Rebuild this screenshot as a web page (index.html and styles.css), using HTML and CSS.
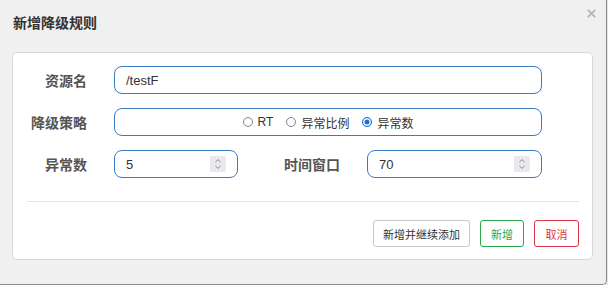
FILE: index.html
```html
<!DOCTYPE html>
<html lang="zh-CN">
<head>
<meta charset="utf-8">
<title>新增降级规则</title>
<link rel="stylesheet" href="styles.css">
</head>
<body>
<div class="modal">
  <div class="modal-header">
    <h4 class="title">新增降级规则</h4>
    <svg class="close" width="9" height="9" viewBox="0 0 9 9"><path d="M0.8 0.8L8.2 8.2M8.2 0.8L0.8 8.2" stroke="#b3b3b3" stroke-width="1.7" fill="none"/></svg>
  </div>
  <div class="card">
    <div class="row">
      <label class="lbl">资源名</label>
      <div class="input wide">/testF</div>
    </div>
    <div class="row">
      <label class="lbl">降级策略</label>
      <div class="input wide radios">
        <span class="opt"><span class="dot"></span>RT</span>
        <span class="opt"><span class="dot"></span>异常比例</span>
        <span class="opt"><span class="dot on"></span>异常数</span>
      </div>
    </div>
    <div class="row">
      <label class="lbl">异常数</label>
      <div class="input short">5<span class="spin"><svg width="16" height="16" viewBox="0 0 16 16"><path d="M5.5 6L8 3.6L10.5 6M5.5 10L8 12.4L10.5 10" stroke="#8a8a8a" stroke-width="1" fill="none"/></svg></span></div>
      <label class="lbl lbl2">时间窗口</label>
      <div class="input mid">70<span class="spin"><svg width="16" height="16" viewBox="0 0 16 16"><path d="M5.5 6L8 3.6L10.5 6M5.5 10L8 12.4L10.5 10" stroke="#8a8a8a" stroke-width="1" fill="none"/></svg></span></div>
    </div>
    <hr class="sep">
    <div class="actions">
      <button class="btn">新增并继续添加</button>
      <button class="btn btn-ok">新增</button>
      <button class="btn btn-cancel">取消</button>
    </div>
  </div>
</div>
</body>
</html>
```
FILE: styles.css
```css
html, body {
  margin: 0;
  padding: 0;
  background: #e6e6e6;
}
body {
  font-family: "Liberation Sans", "Noto Sans CJK SC", sans-serif;
}
.modal {
  width: 606px;
  height: 284px;
  background: #f0f0f0;
  border-right: 1px solid #8c8c8c;
  border-bottom: 1px solid #8c8c8c;
  border-bottom-right-radius: 5px;
}
.modal-header {
  height: 52px;
  box-sizing: border-box;
  padding: 13px 10px 0 13px;
  display: flex;
  justify-content: space-between;
  align-items: flex-start;
}
.title {
  margin: 0;
  font-size: 14px;
  line-height: 20px;
  font-weight: bold;
  color: #333;
}
.close {
  margin-top: -4px;
}
.card {
  margin: 0 13px 0 12px;
  background: #fff;
  border: 1px solid #d9d9d9;
  border-radius: 5px;
  padding: 13px 0 12px;
}
.row {
  display: flex;
  align-items: center;
  height: 28px;
  margin-bottom: 14px;
}
.row:last-of-type {
  margin-bottom: 0;
}
.lbl {
  width: 74px;
  margin-right: 27px;
  text-align: right;
  font-size: 14px;
  font-weight: bold;
  color: #555;
}
.lbl2 {
  width: 102px;
}
.input {
  height: 28px;
  box-sizing: border-box;
  border: 1px solid #3a7bc6;
  border-radius: 8px;
  padding: 0 11px;
  font-size: 13px;
  color: #333;
  display: flex;
  align-items: center;
}
.wide { width: 428px; }
.short { width: 124px; }
.mid { width: 175px; }
.spin {
  margin-left: auto;
  width: 16px;
  height: 16px;
  background: #e9e9ed;
  border-radius: 2px;
  display: flex;
}
.radios {
  justify-content: center;
  font-size: 12px;
}
.opt {
  display: flex;
  align-items: center;
  margin-right: 13px;
}
.opt:last-child { margin-right: 0; }
.dot {
  width: 10px;
  height: 10px;
  box-sizing: border-box;
  border: 1px solid #858585;
  border-radius: 50%;
  margin-right: 5px;
}
.dot.on {
  border-color: #1a6fd8;
  background: #1a6fd8;
  box-shadow: inset 0 0 0 1.5px #fff;
}
.sep {
  margin: 23px 13px 0 14px;
  border: 0;
  border-top: 1px solid #e3e3e3;
  height: 0;
}
.actions {
  display: flex;
  justify-content: flex-end;
  gap: 10px;
  margin: 18px 13px 0 0;
}
.btn {
  height: 27px;
  padding: 0 9px;
  min-width: 44px;
  font-family: "Liberation Sans", "Noto Sans CJK SC", sans-serif;
  font-size: 11px;
  color: #333;
  background: #fff;
  border: 1px solid #c8c8c8;
  border-radius: 3px;
}
.btn-ok {
  color: #28a745;
  border-color: #28a745;
}
.btn-cancel {
  color: #dc3545;
  border-color: #dc3545;
  min-width: 45px;
}
```
